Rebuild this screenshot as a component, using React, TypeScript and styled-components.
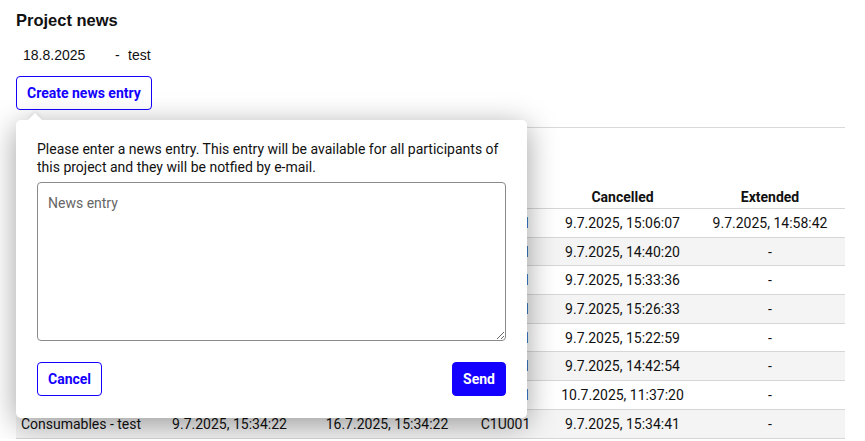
import React from "react";
import styled, { createGlobalStyle } from "styled-components";

const GlobalStyle = createGlobalStyle`
  body {
    margin: 0;
    background: #fff;
    color: #111;
    font-family: "Liberation Sans", Arial, sans-serif;
  }
`;

const BLUE = "#1400ff";

const Page = styled.main`
  position: relative;
  padding: 0 20px 0 16px;
`;

const Title = styled.h2`
  margin: 0;
  padding-top: 10px;
  font-size: 16.5px;
  line-height: 20px;
  font-weight: 700;
`;

const NewsList = styled.ul`
  list-style: none;
  margin: 17px 0 0;
  padding: 0 0 0 7px;
`;

const NewsItem = styled.li`
  display: flex;
  font-size: 14px;
  line-height: 16px;
  span:first-child {
    width: 92px;
  }
  span:nth-child(2) {
    width: 13px;
  }
`;

const Button = styled.button<{ $filled?: boolean }>`
  height: 34px;
  padding: 0 10px;
  border: 1px solid ${BLUE};
  border-radius: 4px;
  background: ${(p) => (p.$filled ? BLUE : "#fff")};
  color: ${(p) => (p.$filled ? "#fff" : BLUE)};
  font-family: Roboto, "Liberation Sans", sans-serif;
  font-size: 14px;
  font-weight: 700;
  cursor: pointer;
`;

const CreateButton = styled(Button)`
  margin-top: 13px;
`;

const Divider = styled.hr`
  margin: 17px 0 0;
  border: 0;
  border-top: 1px solid #d9d9d9;
`;

const SectionHead = styled.h3`
  margin: 0;
  height: 52px;
  font-size: 16px;
  line-height: 52px;
`;

const Table = styled.table`
  width: 100%;
  border-collapse: collapse;
  table-layout: fixed;
  font-family: Roboto, "Liberation Sans", sans-serif;
  font-size: 14px;
  color: #111;
`;

const Th = styled.th`
  height: 23px;
  padding: 5px 4px 0;
  font-weight: 700;
  text-align: center;
  border-bottom: 1px solid #d6d6d6;
`;

const Row = styled.tr`
  &:nth-child(even) {
    background: #f4f4f4;
  }
`;

const Td = styled.td`
  height: 27.7px;
  padding: 0 4px;
  text-align: center;
  white-space: nowrap;
  border-bottom: 1px solid #d6d6d6;
`;

const Popover = styled.div`
  position: absolute;
  left: 16px;
  top: 120px;
  width: 469px;
  padding: 20px 21px 22px;
  background: #fff;
  border-radius: 5px;
  box-shadow: 0 6px 30px rgba(0, 0, 0, 0.38);
  font-family: Roboto, "Liberation Sans", sans-serif;
  font-size: 14px;
  color: #111;

  &::before {
    content: "";
    position: absolute;
    left: 14px;
    top: -5px;
    width: 10px;
    height: 10px;
    background: #fff;
    transform: rotate(45deg);
    box-shadow: -2px -2px 4px rgba(0, 0, 0, 0.06);
  }
`;

const Intro = styled.p`
  margin: 0 -14px 6px 0;
  font-size: 14px;
  line-height: 18px;
`;

const Entry = styled.textarea`
  display: block;
  box-sizing: border-box;
  width: 100%;
  height: 159px;
  padding: 12px 10px;
  border: 1px solid #8a8a8a;
  border-radius: 4px;
  font-family: inherit;
  font-size: 14px;
  line-height: 16px;
  resize: vertical;
  outline: none;
  &::placeholder {
    color: #666;
  }
`;

const Actions = styled.div`
  display: flex;
  justify-content: space-between;
  margin-top: 21px;
`;

const rows = [
  ["Consumables - test", "9.7.2025, 15:05:12", "16.7.2025, 15:05:12", "C1U001", "9.7.2025, 15:06:07", "9.7.2025, 14:58:42"],
  ["Consumables - test", "9.7.2025, 14:39:51", "16.7.2025, 14:39:51", "C1U001", "9.7.2025, 14:40:20", "-"],
  ["Consumables - test", "9.7.2025, 15:33:02", "16.7.2025, 15:33:02", "C1U001", "9.7.2025, 15:33:36", "-"],
  ["Consumables - test", "9.7.2025, 15:26:01", "16.7.2025, 15:26:01", "C1U001", "9.7.2025, 15:26:33", "-"],
  ["Consumables - test", "9.7.2025, 15:22:30", "16.7.2025, 15:22:30", "C1U001", "9.7.2025, 15:22:59", "-"],
  ["Consumables - test", "9.7.2025, 14:42:19", "16.7.2025, 14:42:19", "C1U001", "9.7.2025, 14:42:54", "-"],
  ["Consumables - test", "10.7.2025, 11:36:48", "17.7.2025, 11:36:48", "C1U001", "10.7.2025, 11:37:20", "-"],
  ["Consumables - test", "9.7.2025, 15:34:22", "16.7.2025, 15:34:22", "C1U001", "9.7.2025, 15:34:41", "-"],
];

const widths = [130, 167, 148, 89, 145, 150];

export default function App() {
  return (
    <>
      <GlobalStyle />
      <Page>
        <Title>Project news</Title>
        <NewsList>
          <NewsItem>
            <span>18.8.2025</span>
            <span>-</span>
            <span>test</span>
          </NewsItem>
        </NewsList>
        <CreateButton>Create news entry</CreateButton>
        <Divider />
        <SectionHead>Reservations</SectionHead>
        <Table>
          <colgroup>
            {widths.map((w, i) => (
              <col key={i} style={{ width: w }} />
            ))}
          </colgroup>
          <thead>
            <tr>
              <Th>Item</Th>
              <Th>Start</Th>
              <Th>End</Th>
              <Th>Code</Th>
              <Th>Cancelled</Th>
              <Th>Extended</Th>
            </tr>
          </thead>
          <tbody>
            {rows.map((r, i) => (
              <Row key={i}>
                {r.map((c, j) => (
                  <Td key={j}>{c}</Td>
                ))}
              </Row>
            ))}
          </tbody>
        </Table>

        <Popover>
          <Intro>
            Please enter a news entry. This entry will be available for all participants of this
            project and they will be notfied by e-mail.
          </Intro>
          <Entry placeholder="News entry" />
          <Actions>
            <Button>Cancel</Button>
            <Button $filled>Send</Button>
          </Actions>
        </Popover>
      </Page>
    </>
  );
}
